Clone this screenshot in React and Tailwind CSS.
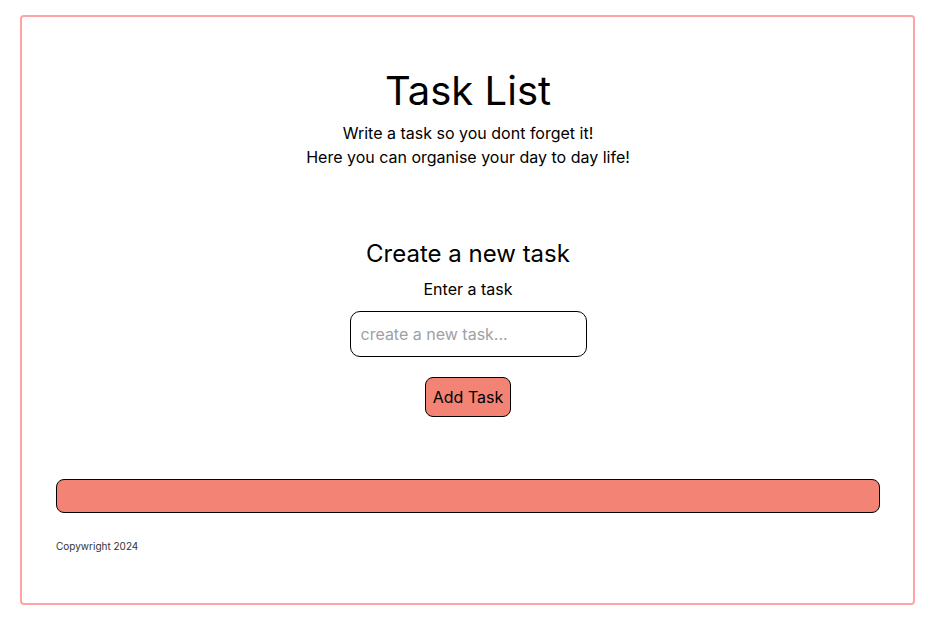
export default function App() {
  return (
    <div className="bg-white pt-[15px] px-5 pb-[21px] font-['Inter',sans-serif] text-black">
      <div className="h-[590px] rounded-[4px] border-2 border-[#ffa3a3] pl-[34px] pr-[33px] pt-[50px] flex flex-col">
        {/* Header */}
        <div className="flex flex-col items-center">
          <h1 className="text-[40px] leading-[48px]">Task List</h1>
          <p className="text-base leading-6 mt-[6px]">Write a task so you dont forget it!</p>
          <p className="text-base leading-6">Here you can organise your day to day life!</p>
        </div>

        {/* Form */}
        <div className="flex flex-col items-center mt-[69px]">
          <h2 className="text-[24px] leading-8">Create a new task</h2>
          <label className="text-base leading-6 mt-[7px]">Enter a task</label>
          <input
            type="text"
            placeholder="create a new task..."
            className="mt-[10px] w-[237px] h-[46px] rounded-[10px] border border-black px-[10px] text-base placeholder:text-[#a0a0a8] outline-none"
          />
          <button className="mt-5 w-[86px] h-10 rounded-lg border border-black bg-[#f38374] text-base">
            Add Task
          </button>
        </div>

        {/* Task list bar */}
        <div className="mt-[62px] h-[34px] rounded-lg border border-black bg-[#f38374]"></div>

        <footer className="mt-[26px] text-[10px] text-[#333]">Copywright 2024</footer>
      </div>
    </div>
  );
}
